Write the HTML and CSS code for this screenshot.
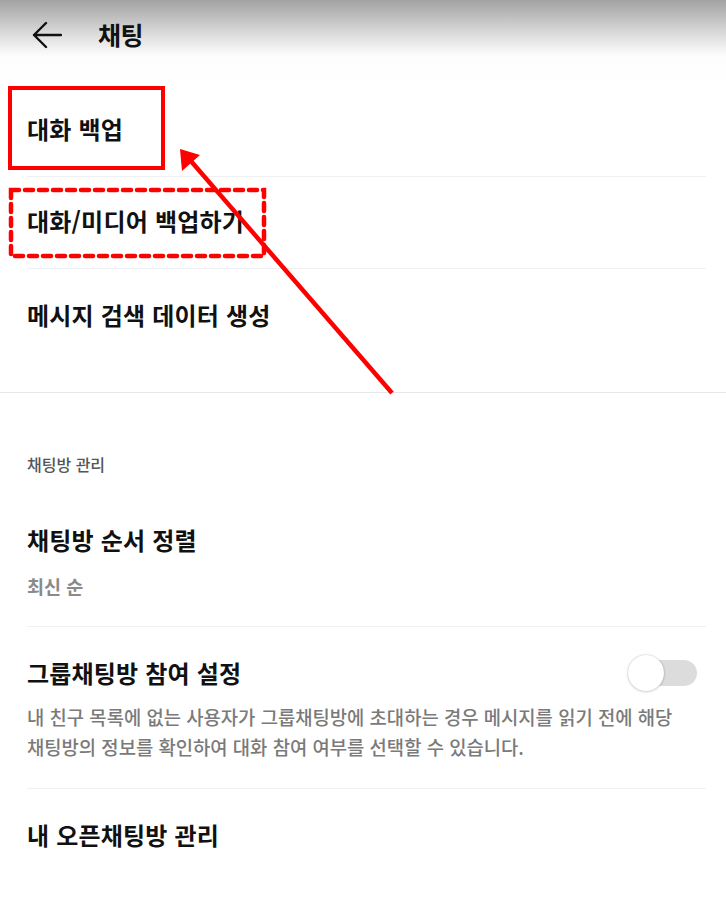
FILE: index.html
```html
<!DOCTYPE html>
<html lang="ko">
<head>
    <meta charset="UTF-8">
    <meta name="viewport" content="width=device-width, initial-scale=1.0">
    <title>채팅</title>
    <link rel="stylesheet" href="styles.css">
</head>
<body>
    <div class="screen">
        <header class="topbar">
            <svg class="back" width="30" height="28" viewBox="0 0 30 28">
                <path d="M29 14H2M14 2L2 14l12 12" fill="none" stroke="#111" stroke-width="2.4" stroke-linecap="round" stroke-linejoin="round"/>
            </svg>
            <h1>채팅</h1>
        </header>

        <div class="list">
            <div class="item first"><div class="title">대화 백업</div></div>
            <div class="item second"><div class="title">대화/미디어 백업하기</div></div>
            <div class="item third"><div class="title">메시지 검색 데이터 생성</div></div>
        </div>

        <div class="section">
            <div class="section-label">채팅방 관리</div>
            <div class="item sort">
                <div class="title">채팅방 순서 정렬</div>
                <div class="sub">최신 순</div>
            </div>
            <div class="item group">
                <div class="row">
                    <div class="title">그룹채팅방 참여 설정</div>
                    <div class="toggle"><span class="knob"></span></div>
                </div>
                <div class="desc">내 친구 목록에 없는 사용자가 그룹채팅방에 초대하는 경우 메시지를 읽기 전에 해당 채팅방의 정보를 확인하여 대화 참여 여부를 선택할 수 있습니다.</div>
            </div>
            <div class="item open"><div class="title">내 오픈채팅방 관리</div></div>
        </div>

        <!-- annotation marks drawn over the screenshot -->
        <svg class="marks" width="726" height="901" viewBox="0 0 726 901">
            <rect x="10" y="88" width="153" height="80" fill="none" stroke="#ff0000" stroke-width="4"/>
            <rect x="11" y="190" width="253" height="66" fill="none" stroke="#ff0000" stroke-width="4.5" stroke-dasharray="8 6" stroke-linecap="round"/>
            <line x1="392" y1="393" x2="190" y2="160" stroke="#ff0000" stroke-width="4.5"/>
            <polygon points="180,149 182,171 200,155" fill="#ff0000"/>
        </svg>
    </div>
</body>
</html>
```

FILE: styles.css
```css
* {
    margin: 0;
    padding: 0;
    box-sizing: border-box;
}
body {
    background: #fff;
    font-family: "Noto Sans CJK KR", "Noto Sans", sans-serif;
    color: #111;
    word-break: keep-all;
}
.screen {
    position: relative;
    width: 726px;
    height: 901px;
    overflow: hidden;
}
.topbar {
    height: 85px;
    display: flex;
    align-items: flex-start;
    padding: 20px 0 0 32px;
    background: linear-gradient(to bottom, #a2a2a2 0px, #d8d8d8 32px, #fdfdfd 56px, #fff 85px);
}
.topbar .back {
    margin-top: 1px;
}
.topbar h1 {
    margin-left: 36px;
    font-size: 25px;
    font-weight: 700;
    line-height: 28px;
    letter-spacing: -0.5px;
}
.item {
    margin: 0 20px 0 27px;
    border-bottom: 1px solid #f0f0f0;
}
.title {
    font-size: 24px;
    font-weight: 700;
    line-height: 30px;
    letter-spacing: 0.2px;
}
.first {
    padding: 29px 0 32px;
}
.second {
    padding: 29px 0 32px;
}
.third {
    padding: 31px 0 62px;
    border-bottom: none;
}
.section {
    border-top: 1px solid #e6e6e6;
}
.section-label {
    padding: 61px 0 0 27px;
    font-size: 16px;
    font-weight: 500;
    line-height: 20px;
    color: #555;
}
.sort {
    padding: 51px 0 28px;
}
.sub {
    margin-top: 19px;
    font-size: 18.5px;
    font-weight: 700;
    line-height: 24px;
    color: #8a8a8a;
}
.group {
    padding: 31px 0 26px;
}
.row {
    display: flex;
    justify-content: space-between;
    align-items: center;
}
.toggle {
    position: relative;
    width: 57px;
    height: 26px;
    margin-right: 9px;
    border-radius: 13px;
    background: #dcdcdc;
}
.knob {
    position: absolute;
    left: -12px;
    top: -5px;
    width: 36px;
    height: 36px;
    border-radius: 50%;
    background: #fff;
    box-shadow: 0 0 2px rgba(0,0,0,.25), 0 1px 3px rgba(0,0,0,.12);
}
.desc {
    margin-top: 14px;
    font-size: 18.8px;
    font-weight: 500;
    line-height: 30px;
    color: #7a7a7a;
}
.open {
    padding-top: 31px;
    border-bottom: none;
}
.marks {
    position: absolute;
    left: 0;
    top: 0;
    pointer-events: none;
}
```
